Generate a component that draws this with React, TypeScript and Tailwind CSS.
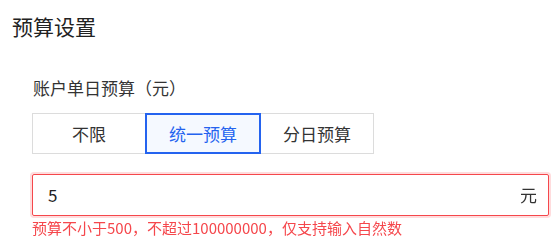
import React, { useState } from 'react'

const options = ['不限', '统一预算', '分日预算']

export default function App(){
  const [mode, setMode] = useState(1)
  const [value, setValue] = useState('5')

  return (
    <div className="w-[557px] h-[244px] bg-white text-[#333] font-['Noto_Sans_CJK_SC',sans-serif]">
      <div className="pl-[12px] pt-[11px] text-[21px] leading-[30px] text-[#222]">预算设置</div>
      <div className="pl-[32px] pt-[35px]">
        <div className="pl-[1px] text-[17px] leading-[24px] text-[#333]">账户单日预算（元）</div>
        <div className="mt-[13px] flex">
          {options.map((o,i)=> (
            <button
              key={o}
              onClick={()=>setMode(i)}
              className={`h-[41px] text-[17px] ${i===1 ? 'w-[116px]' : 'w-[114px]'} ${i>0 ? '-ml-[1px]' : ''} ${mode===i ? 'relative z-10 border-2 border-[#2463ef] bg-[#f5f9ff] text-[#2463ef]' : 'border border-[#dcdcdc] bg-white text-[#333]'}`}
            >{o}</button>
          ))}
        </div>
        <div className="mt-[20px] w-[517px] h-[42px] flex items-center pl-[15px] pr-[11px] border border-[#f5474c] rounded-[2px] shadow-[0_0_0_2px_#ffdcdd]">
          <input
            autoFocus
            value={value}
            onChange={e=>setValue(e.target.value)}
            className="flex-1 outline-none text-[17px] text-[#222] bg-transparent caret-[#222]"
          />
          <span className="text-[17px] text-[#333]">元</span>
        </div>
        <div className="mt-[2px] text-[15px] leading-[20px] text-[#f5474c]">预算不小于500，不超过100000000，仅支持输入自然数</div>
      </div>
    </div>
  )
}
